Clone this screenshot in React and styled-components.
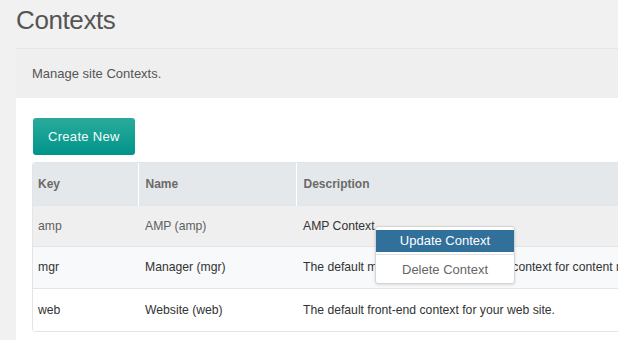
import React from 'react';
import styled, { createGlobalStyle } from 'styled-components';

const GlobalStyle = createGlobalStyle`
  html, body {
    margin: 0;
    padding: 0;
    background: #f1f1f1;
    overflow: hidden;
    font-family: "Liberation Sans", Arial, sans-serif;
  }
`;

const Page = styled.div`
  padding: 0 16px;
  width: 780px;
`;

const Title = styled.h1`
  margin: 0;
  padding-top: 5px;
  height: 43px;
  font-size: 26px;
  font-weight: 400;
  letter-spacing: -0.4px;
  line-height: 30px;
  color: #555;
`;

const Panel = styled.div`
  border-top: 1px solid #e6e6e6;
  background: #fff;
`;

const PanelHeader = styled.div`
  height: 49px;
  display: flex;
  align-items: center;
  padding: 0 16px;
  background: #efefef;
  font-size: 13px;
  color: #555;
`;

const PanelBody = styled.div`
  padding: 20px 16px 8px;
`;

const Button = styled.button`
  height: 37px;
  padding: 0 15px;
  border: none;
  border-radius: 3px;
  background: linear-gradient(#2aab9c, #00948a);
  font-family: inherit;
  font-size: 13px;
  letter-spacing: 0.3px;
  color: #f4fbfa;
  margin-left: 1px;
`;

const TableWrap = styled.div`
  position: relative;
  margin-top: 7px;
`;

const TableFrame = styled.div`
  border: 1px solid #e4e4e4;
  border-radius: 3px;
  overflow: hidden;
`;

const Table = styled.table`
  width: 100%;
  border-collapse: collapse;
  font-size: 12.2px;
`;

const Th = styled.th`
  height: 42px;
  padding: 0 7px 0 ${p => (p.$first ? '5px' : '7px')};
  text-align: left;
  font-size: 12px;
  font-weight: 700;
  color: #6a6a6a;
  background: #e4e8eb;
  border-left: ${p => (p.$first ? 'none' : '1px solid #fff')};
  width: ${p => p.$width || 'auto'};
  box-sizing: border-box;
`;

const Tr = styled.tr`
  background: ${p => p.$bg};
  border-top: 1px solid #e4e4e4;
`;

const Td = styled.td`
  height: ${p => p.$h || 41}px;
  padding: 0 7px 0 ${p => (p.$first ? '5px' : '7px')};
  color: ${p => (p.$muted ? '#5f5f5f' : '#333')};
  white-space: nowrap;
`;

const Menu = styled.div`
  position: absolute;
  left: 343px;
  top: 64px;
  width: 140px;
  padding: 3px 0 2px;
  background: #fff;
  border: 1px solid #d4d4d4;
  border-radius: 3px;
  box-shadow: 0 1px 3px rgba(0, 0, 0, 0.12);
  box-sizing: border-box;
`;

const MenuItem = styled.div`
  height: 22px;
  line-height: 22px;
  text-align: center;
  font-size: 13px;
  color: ${p => (p.$active ? '#fff' : '#666')};
  background: ${p => (p.$active ? '#30709a' : 'transparent')};
`;

const MenuDivider = styled.div`
  height: 1px;
  margin: 2px 0 4px;
  background: #e2e2e2;
`;

const rows = [
  { key: 'amp', name: 'AMP (amp)', desc: 'AMP Context', bg: '#efefef', muted: true, h: 40 },
  { key: 'mgr', name: 'Manager (mgr)', desc: 'The default manager or administration context for content management activity.', bg: '#f7f9fb', h: 41 },
  { key: 'web', name: 'Website (web)', desc: 'The default front-end context for your web site.', bg: '#fff', h: 42 },
];

const App = () => (
  <Page>
    <GlobalStyle />
    <Title>Contexts</Title>
    <Panel>
      <PanelHeader>Manage site Contexts.</PanelHeader>
      <PanelBody>
        <Button>Create New</Button>
        <TableWrap>
          <TableFrame>
            <Table>
              <thead>
                <tr>
                  <Th $first $width="105px">Key</Th>
                  <Th $width="158px">Name</Th>
                  <Th>Description</Th>
                </tr>
              </thead>
              <tbody>
                {rows.map(r => (
                  <Tr key={r.key} $bg={r.bg}>
                    <Td $first $h={r.h} $muted={r.muted}>{r.key}</Td>
                    <Td $h={r.h} $muted={r.muted}>{r.name}</Td>
                    <Td $h={r.h}>{r.desc}</Td>
                  </Tr>
                ))}
              </tbody>
            </Table>
          </TableFrame>
          <Menu>
            <MenuItem $active>Update Context</MenuItem>
            <MenuDivider />
            <MenuItem>Delete Context</MenuItem>
          </Menu>
        </TableWrap>
      </PanelBody>
    </Panel>
  </Page>
);

export default App;
